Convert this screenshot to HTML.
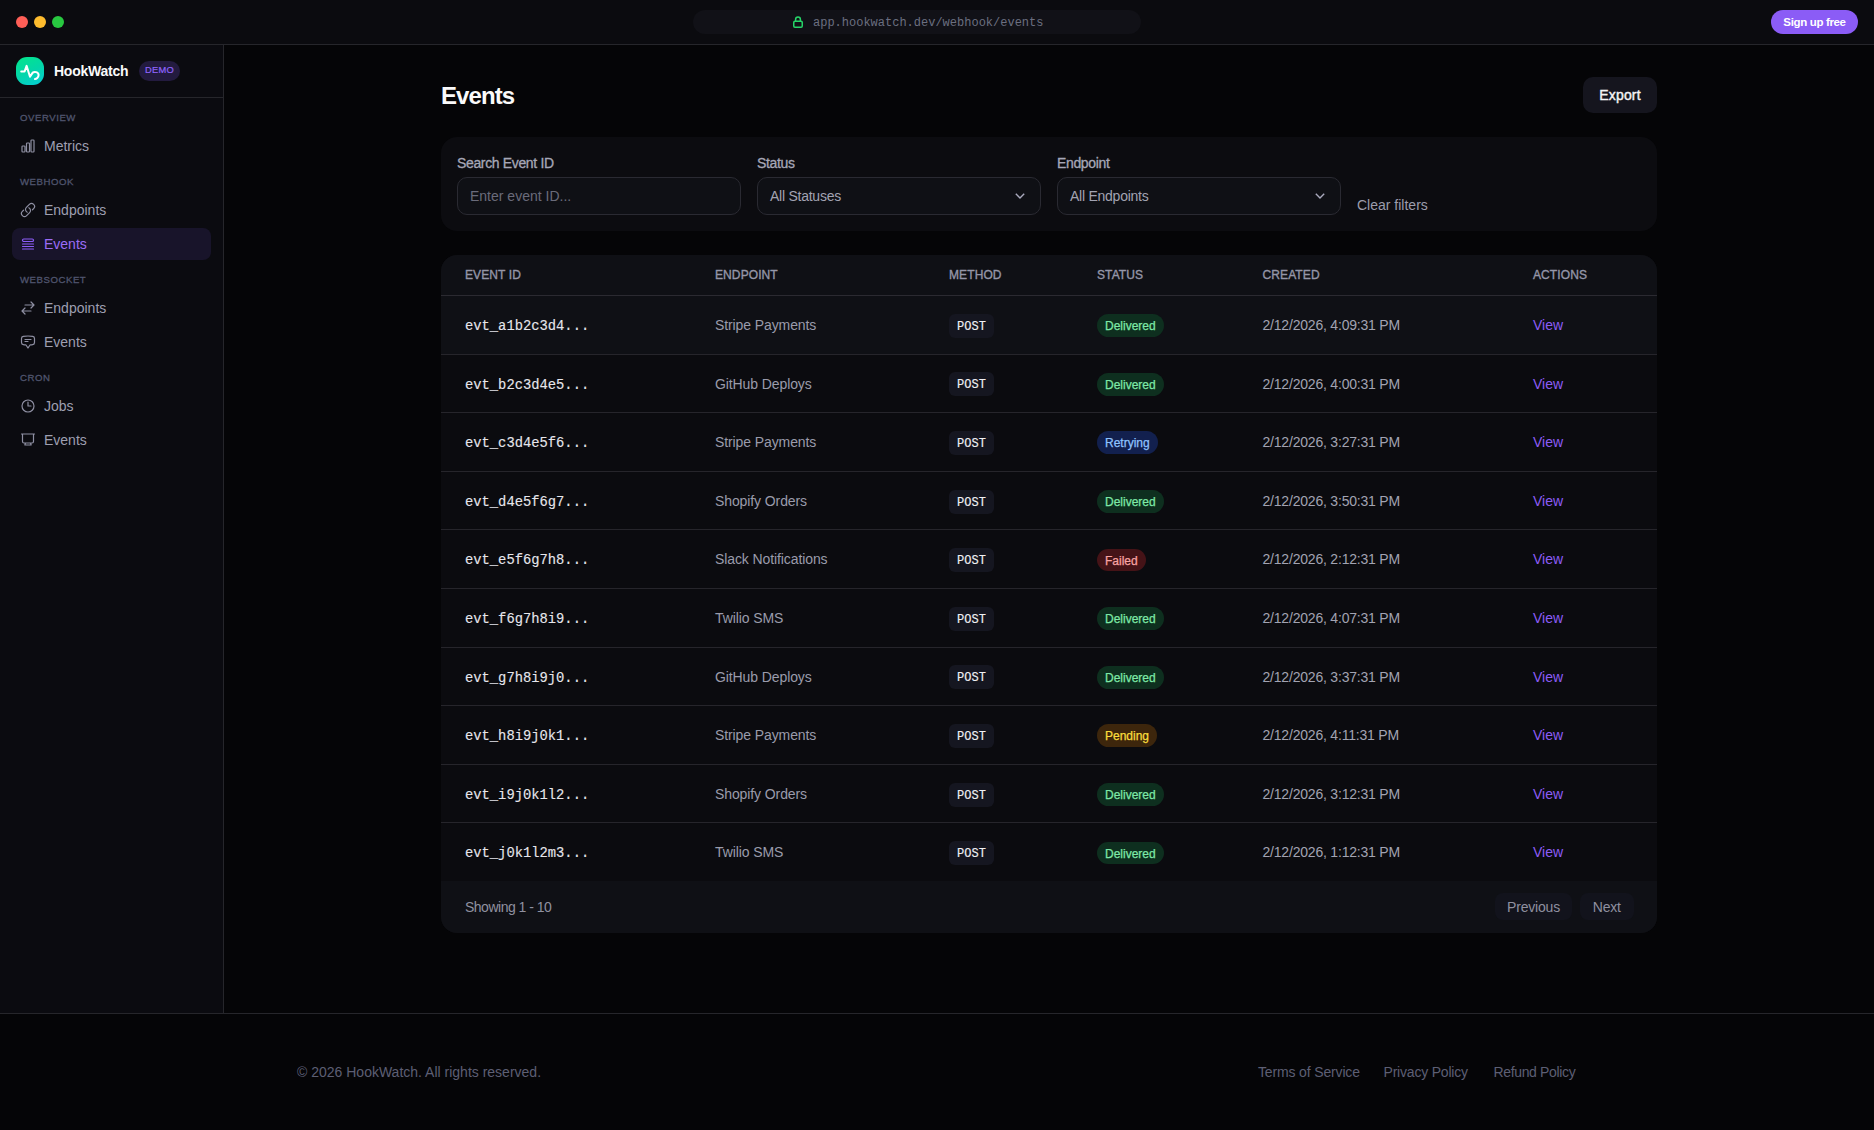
<!DOCTYPE html>
<html>
<head>
<meta charset="utf-8">
<style>
*{box-sizing:border-box;margin:0;padding:0}
html,body{width:1874px;height:1130px;overflow:hidden;background:#050507;font-family:"Liberation Sans",sans-serif;color:#e4e4e7}
.abs{position:absolute}
.mono{font-family:"Liberation Mono",monospace}
/* top bar */
#top{position:absolute;left:0;top:0;width:1874px;height:45px;background:#0b0b0f;border-bottom:1px solid #26262b}
.dot{position:absolute;top:16px;width:12px;height:12px;border-radius:50%}
#url{position:absolute;left:693px;top:10px;width:448px;height:24px;border-radius:12px;background:#111117}
#url .t{position:absolute;left:120px;top:1px;height:24px;line-height:24px;font-size:12px;color:#6b6f80;font-family:"Liberation Mono",monospace}
#signup{position:absolute;left:1771px;top:10px;width:87px;height:24px;border-radius:12px;background:#8b5cf6;color:#fff;font-size:11.5px;font-weight:700;line-height:24px;text-align:center;letter-spacing:-0.35px}
/* sidebar */
#side{position:absolute;left:0;top:45px;width:224px;height:968px;background:#0b0b10;border-right:1px solid #26262b}
#sidehead{position:absolute;left:0;top:0;width:223px;height:53px;border-bottom:1px solid #26262b}
#logo{position:absolute;left:16px;top:12px;width:28px;height:28px;border-radius:11px;background:linear-gradient(155deg,#03e68a 0%,#03d6a8 50%,#04cdd8 100%)}
#brand{position:absolute;left:54px;top:16px;height:20px;line-height:20px;font-size:14px;font-weight:700;color:#fafafa;letter-spacing:-0.25px}
#demo{position:absolute;left:139px;top:16px;width:41px;height:20px;border-radius:10px;background:#231b3f;color:#8f64fb;font-size:9.3px;line-height:19.6px;text-align:center;letter-spacing:0.3px;-webkit-text-stroke:0.2px #8f64fb}
.sec{position:absolute;left:20px;height:14px;line-height:13.5px;font-size:9.6px;font-weight:400;color:#50556e;letter-spacing:0.55px;-webkit-text-stroke:0.3px #50556e}
.item{position:absolute;left:12px;width:199px;height:32px;border-radius:8px}
.item svg{position:absolute;left:8px;top:8px;width:16px;height:16px}
.item span{position:absolute;left:32px;top:0;height:32px;line-height:32px;font-size:14px;color:#9e9fb0}
.item.active{background:#18142a}
.item.active span{color:#9b6cf7}
/* main */
#title{position:absolute;left:441px;top:81px;height:30px;line-height:30px;font-size:24px;font-weight:700;color:#fafafa;letter-spacing:-0.9px}
#export{position:absolute;left:1583px;top:77px;width:74px;height:36px;border-radius:10px;background:#15151e;color:#f4f4f5;font-size:14px;font-weight:400;line-height:36px;text-align:center;letter-spacing:0.2px;-webkit-text-stroke:0.4px #f4f4f5}
#filters{position:absolute;left:441px;top:137px;width:1216px;height:94px;border-radius:16px;background:#0c0c10}
.lbl{position:absolute;top:16px;height:20px;line-height:20px;font-size:14px;color:#a6a7b7;letter-spacing:-0.35px;-webkit-text-stroke:0.3px #a6a7b7}
.inp{position:absolute;top:40px;width:284px;height:38px;border-radius:10px;border:1px solid #2a2a32;background:#0f1015}
.inp span{position:absolute;left:12px;top:0;height:36px;line-height:36px;font-size:14px}
.inp svg{position:absolute;right:15px;top:14px;width:10px;height:8px}
#clear{position:absolute;left:916px;top:58px;height:20px;line-height:20px;font-size:14px;color:#9c9dac;letter-spacing:0px}
/* table */
#table{position:absolute;left:441px;top:255px;width:1216px;height:678px;border-radius:16px;background:#0b0b0f;overflow:hidden}
#thead{position:absolute;left:0;top:0;width:1216px;height:41px;background:#0f1015;border-bottom:1px solid #2b2a31}
.th{position:absolute;top:10px;height:20px;line-height:20px;font-size:12px;font-weight:400;color:#9596a8;letter-spacing:0.1px;-webkit-text-stroke:0.35px #9596a8}
.row{position:absolute;left:0;width:1216px;height:58.6px;border-top:1px solid #26252b}
.row.first{border-top:none;background:#0f1015}
.cell{position:absolute;top:1px;height:57.6px;line-height:57.6px;font-size:14px;white-space:nowrap}
.id{left:24px;top:2px;font-family:"Liberation Mono",monospace;font-size:13.8px;color:#e6e6ec;-webkit-text-stroke:0.12px #e6e6ec}
.ep{left:274px;color:#9a9bab;letter-spacing:-0.1px}
.method{position:absolute;left:508px;top:17.8px;width:45px;height:24px;border-radius:6px;background:#151620;color:#f0f0f4;font-family:"Liberation Mono",monospace;font-weight:400;-webkit-text-stroke:0.15px #f0f0f4;font-size:12px;line-height:26px;text-align:center}
.badge{position:absolute;left:656px;top:18.3px;height:22.8px;line-height:24.4px;border-radius:11.4px;font-size:12px;padding:0 8px;white-space:nowrap;-webkit-text-stroke:0.25px currentColor}
.b-del{background:#0e2f1f;color:#7de8a6}
.b-ret{background:#12204e;color:#8fc2ff}
.b-fail{background:#451317;color:#f9a3a3}
.b-pend{background:#3d260c;color:#fadd3c}
.dt{left:821.5px;color:#a2a3b2;letter-spacing:-0.2px}
.view{left:1092px;color:#8b5cf6}
#tfoot{position:absolute;left:0;top:626px;width:1216px;height:52px;background:#0f1015}
#showing{position:absolute;left:24px;top:16px;height:20px;line-height:20px;font-size:14px;color:#8f90a0;letter-spacing:-0.5px}
.pbtn{position:absolute;top:12px;height:27.4px;line-height:29px;border-radius:8px;background:#12131c;color:#8f90a0;font-size:14px;text-align:center;letter-spacing:-0.2px}
/* footer */
#foot{position:absolute;left:0;top:1013px;width:1874px;height:117px;border-top:1px solid #26262b;background:#050507}
.ft{position:absolute;top:48px;height:20px;line-height:20px;font-size:14px;color:#5d5f74;white-space:nowrap}
</style>
</head>
<body>
<div id="top">
  <div class="dot" style="left:16px;background:#ff5f57"></div>
  <div class="dot" style="left:34px;background:#febc2e"></div>
  <div class="dot" style="left:52px;background:#28c840"></div>
  <div id="url">
    <svg class="abs" style="left:100px;top:6px" width="10" height="12" viewBox="0 0 10 12"><rect x="0.75" y="5.25" width="8.5" height="6" rx="1.2" fill="none" stroke="#26d468" stroke-width="1.5"/><path d="M2.6 5.2V3.4a2.4 2.4 0 0 1 4.8 0v1.8" fill="none" stroke="#26d468" stroke-width="1.5"/></svg>
    <div class="t">app.hookwatch.dev/webhook/events</div>
  </div>
  <div id="signup">Sign up free</div>
</div>

<div id="side">
  <div id="sidehead">
    <div id="logo"><svg width="28" height="28" viewBox="0 0 28 28"><path d="M5.2 14.4H8.6L10.6 8.9L14 19.8L16.7 15.6C18.2 14.4 22.6 14.8 22.6 18C22.6 20.6 20.2 22 19 22.1" fill="none" stroke="#fff" stroke-width="2" stroke-linecap="round" stroke-linejoin="round"/></svg></div>
    <div id="brand">HookWatch</div>
    <div id="demo">DEMO</div>
  </div>
  <!-- sections: y relative to sidebar top (45) -->
  <div class="sec" style="top:65.6px">OVERVIEW</div>
  <div class="item" style="top:85px"><svg viewBox="0 0 24 24" fill="none" stroke="#8e8fa2" stroke-width="1.8"><path d="M3 13.125C3 12.504 3.504 12 4.125 12h2.25c.621 0 1.125.504 1.125 1.125v6.75C7.5 20.496 6.996 21 6.375 21h-2.25A1.125 1.125 0 013 19.875v-6.75zM9.75 8.625c0-.621.504-1.125 1.125-1.125h2.25c.621 0 1.125.504 1.125 1.125v11.25c0 .621-.504 1.125-1.125 1.125h-2.25a1.125 1.125 0 01-1.125-1.125V8.625zM16.5 4.125c0-.621.504-1.125 1.125-1.125h2.25C20.496 3 21 3.504 21 4.125v15.75c0 .621-.504 1.125-1.125 1.125h-2.25a1.125 1.125 0 01-1.125-1.125V4.125z"/></svg><span>Metrics</span></div>
  <div class="sec" style="top:129.5px">WEBHOOK</div>
  <div class="item" style="top:149px"><svg viewBox="0 0 24 24" fill="none" stroke="#8e8fa2" stroke-width="1.8" stroke-linecap="round" stroke-linejoin="round"><path d="M13.19 8.688a4.5 4.5 0 011.242 7.244l-4.5 4.5a4.5 4.5 0 01-6.364-6.364l1.757-1.757m13.35-.622l1.757-1.757a4.5 4.5 0 00-6.364-6.364l-4.5 4.5a4.5 4.5 0 001.242 7.244"/></svg><span>Endpoints</span></div>
  <div class="item active" style="top:183px"><svg viewBox="0 0 24 24" fill="none" stroke="#8b5cf6" stroke-width="1.8" stroke-linecap="round" stroke-linejoin="round"><path d="M3.75 12h16.5m-16.5 3.75h16.5M3.75 19.5h16.5M5.625 4.5h12.75a1.875 1.875 0 010 3.75H5.625a1.875 1.875 0 010-3.75z"/></svg><span>Events</span></div>
  <div class="sec" style="top:228.4px">WEBSOCKET</div>
  <div class="item" style="top:247px"><svg viewBox="0 0 24 24" fill="none" stroke="#8e8fa2" stroke-width="1.8" stroke-linecap="round" stroke-linejoin="round"><path d="M7.5 21L3 16.5m0 0L7.5 12M3 16.5h13.5m0-13.5L21 7.5m0 0L16.5 12M21 7.5H7.5"/></svg><span>Endpoints</span></div>
  <div class="item" style="top:281px"><svg viewBox="0 0 24 24" fill="none" stroke="#8e8fa2" stroke-width="1.8" stroke-linecap="round" stroke-linejoin="round"><path d="M7.5 8.25h9m-9 3H12m-9.75 1.51c0 1.6 1.123 2.994 2.707 3.227 1.129.166 2.27.293 3.423.379.35.026.67.21.865.501L12 21l2.755-4.133a1.14 1.14 0 01.865-.501 48.172 48.172 0 003.423-.379c1.584-.233 2.707-1.626 2.707-3.228V6.741c0-1.602-1.123-2.995-2.707-3.228A48.394 48.394 0 0012 3c-2.392 0-4.744.175-7.043.513C3.373 3.746 2.25 5.14 2.25 6.741v6.018z"/></svg><span>Events</span></div>
  <div class="sec" style="top:325.6px">CRON</div>
  <div class="item" style="top:345px"><svg viewBox="0 0 24 24" fill="none" stroke="#8e8fa2" stroke-width="1.8" stroke-linecap="round" stroke-linejoin="round"><path d="M12 6v6h4.5m4.5 0a9 9 0 11-18 0 9 9 0 0118 0z"/></svg><span>Jobs</span></div>
  <div class="item" style="top:379px"><svg viewBox="0 0 24 24" fill="none" stroke="#8e8fa2" stroke-width="1.8" stroke-linecap="round" stroke-linejoin="round"><path d="M3.75 3v11.25A2.25 2.25 0 006 16.5h2.25M3.75 3h-1.5m1.5 0h16.5m0 0h1.5m-1.5 0v11.25A2.25 2.25 0 0118 16.5h-2.25m-7.5 0h7.5m-7.5 0l-1 3m8.5-3l1 3m0 0h-9.5"/></svg><span>Events</span></div>
</div>

<div id="title">Events</div>
<div id="export">Export</div>

<div id="filters">
  <div class="lbl" style="left:16px">Search Event ID</div>
  <div class="lbl" style="left:316px">Status</div>
  <div class="lbl" style="left:616px">Endpoint</div>
  <div class="inp" style="left:16px"><span style="color:#6a6b7a">Enter event ID...</span></div>
  <div class="inp" style="left:316px"><span style="color:#a2a3b2;letter-spacing:-0.25px">All Statuses</span><svg viewBox="0 0 10 8"><path d="M0.8 1.8L5 6L9.2 1.8" fill="none" stroke="#a9a9bd" stroke-width="1.4"/></svg></div>
  <div class="inp" style="left:616px"><span style="color:#a2a3b2;letter-spacing:-0.25px">All Endpoints</span><svg viewBox="0 0 10 8"><path d="M0.8 1.8L5 6L9.2 1.8" fill="none" stroke="#a9a9bd" stroke-width="1.4"/></svg></div>
  <div id="clear">Clear filters</div>
</div>

<div id="table">
  <div id="thead">
    <div class="th" style="left:24px">EVENT ID</div>
    <div class="th" style="left:274px">ENDPOINT</div>
    <div class="th" style="left:508px">METHOD</div>
    <div class="th" style="left:656px">STATUS</div>
    <div class="th" style="left:821.5px">CREATED</div>
    <div class="th" style="left:1092px">ACTIONS</div>
  </div>
  <div id="rows">
  <div class="row first" style="top:41.0px"><div class="cell id">evt_a1b2c3d4...</div><div class="cell ep">Stripe Payments</div><div class="method">POST</div><div class="badge b-del">Delivered</div><div class="cell dt">2/12/2026, 4:09:31 PM</div><div class="cell view">View</div></div>
  <div class="row" style="top:98.6px"><div class="cell id">evt_b2c3d4e5...</div><div class="cell ep">GitHub Deploys</div><div class="method">POST</div><div class="badge b-del">Delivered</div><div class="cell dt">2/12/2026, 4:00:31 PM</div><div class="cell view">View</div></div>
  <div class="row" style="top:157.2px"><div class="cell id">evt_c3d4e5f6...</div><div class="cell ep">Stripe Payments</div><div class="method">POST</div><div class="badge b-ret">Retrying</div><div class="cell dt">2/12/2026, 3:27:31 PM</div><div class="cell view">View</div></div>
  <div class="row" style="top:215.8px"><div class="cell id">evt_d4e5f6g7...</div><div class="cell ep">Shopify Orders</div><div class="method">POST</div><div class="badge b-del">Delivered</div><div class="cell dt">2/12/2026, 3:50:31 PM</div><div class="cell view">View</div></div>
  <div class="row" style="top:274.4px"><div class="cell id">evt_e5f6g7h8...</div><div class="cell ep">Slack Notifications</div><div class="method">POST</div><div class="badge b-fail">Failed</div><div class="cell dt">2/12/2026, 2:12:31 PM</div><div class="cell view">View</div></div>
  <div class="row" style="top:333.0px"><div class="cell id">evt_f6g7h8i9...</div><div class="cell ep">Twilio SMS</div><div class="method">POST</div><div class="badge b-del">Delivered</div><div class="cell dt">2/12/2026, 4:07:31 PM</div><div class="cell view">View</div></div>
  <div class="row" style="top:391.6px"><div class="cell id">evt_g7h8i9j0...</div><div class="cell ep">GitHub Deploys</div><div class="method">POST</div><div class="badge b-del">Delivered</div><div class="cell dt">2/12/2026, 3:37:31 PM</div><div class="cell view">View</div></div>
  <div class="row" style="top:450.2px"><div class="cell id">evt_h8i9j0k1...</div><div class="cell ep">Stripe Payments</div><div class="method">POST</div><div class="badge b-pend">Pending</div><div class="cell dt">2/12/2026, 4:11:31 PM</div><div class="cell view">View</div></div>
  <div class="row" style="top:508.8px"><div class="cell id">evt_i9j0k1l2...</div><div class="cell ep">Shopify Orders</div><div class="method">POST</div><div class="badge b-del">Delivered</div><div class="cell dt">2/12/2026, 3:12:31 PM</div><div class="cell view">View</div></div>
  <div class="row" style="top:567.4px"><div class="cell id">evt_j0k1l2m3...</div><div class="cell ep">Twilio SMS</div><div class="method">POST</div><div class="badge b-del">Delivered</div><div class="cell dt">2/12/2026, 1:12:31 PM</div><div class="cell view">View</div></div>
  </div>
  <div id="tfoot">
    <div id="showing">Showing 1 - 10</div>
    <div class="pbtn" style="left:1054px;width:77px">Previous</div>
    <div class="pbtn" style="left:1139px;width:53.5px">Next</div>
  </div>
</div>

<div id="foot">
  <div class="ft" style="left:297px">© 2026 HookWatch. All rights reserved.</div>
  <div class="ft" style="left:1258px;letter-spacing:-0.15px">Terms of Service</div>
  <div class="ft" style="left:1383.5px;letter-spacing:-0.2px">Privacy Policy</div>
  <div class="ft" style="left:1493.5px;letter-spacing:-0.35px">Refund Policy</div>
</div>
</body>
</html>
